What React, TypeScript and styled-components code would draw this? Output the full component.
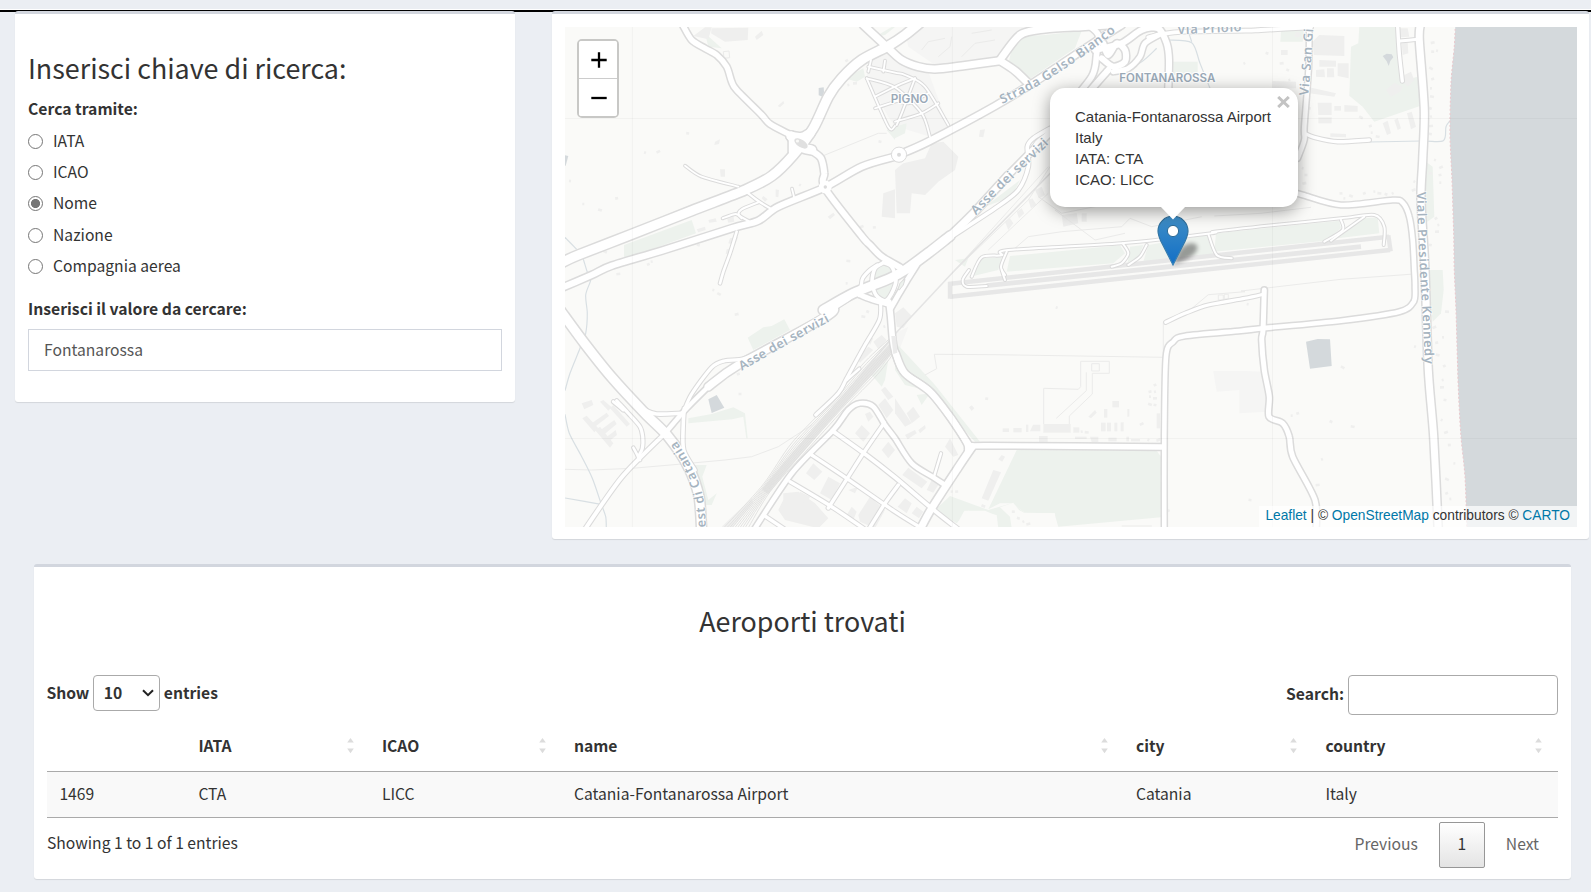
import React, { useState } from "react";
import styled, { createGlobalStyle } from "styled-components";

const GlobalStyle = createGlobalStyle`
  *, *::before, *::after { box-sizing: border-box; }
  body {
    margin: 0;
    background: #ebeef3;
    color: #333;
    font-family: "Source Sans Pro", "Noto Sans CJK SC", "Open Sans", sans-serif;
    font-size: 15.66px;
    line-height: 25px;
    overflow: hidden;
  }
`;

/* ---------- page ---------- */

const Page = styled.main`
  width: 1591px;
  height: 892px;
  padding-top: 9px;
  overflow: hidden;
`;

const TopRule = styled.div`
  height: 3px;
  border-top: 1px solid #fff;
  background: #000;
`;

const TopRow = styled.div`
  display: flex;
  align-items: flex-start;
  gap: 37px;
  margin-top: -1px;
  padding-left: 15px;
`;

const Box = styled.section`
  position: relative;
  background: #fff;
  border-top: 3px solid #d2d6de;
  border-radius: 3px;
  box-shadow: 0 1px 1px rgba(0, 0, 0, 0.1);
`;

const SearchBox = styled(Box)`
  width: 500px;
  height: 391px;
  padding: 37px 13px 0;
`;

const MapBox = styled(Box)`
  width: 1037px;
  height: 528px;
  padding: 13px 12px 0 13px;
`;

const ResultsBox = styled(Box)`
  width: 1537px;
  height: 315px;
  margin: 25px 0 0 34px;
  padding: 37px 13px 0;
`;

/* ---------- search form ---------- */

const Title = styled.h3<{ $center?: boolean }>`
  margin: 0;
  font-size: 26.86px;
  font-weight: 400;
  line-height: 34px;
  text-align: ${(p) => (p.$center ? "center" : "left")};
`;

const FieldLabel = styled.div<{ $top?: number }>`
  padding-top: ${(p) => p.$top || 0}px;
  font-size: 15.74px;
  font-weight: 700;
`;

const RadioList = styled.div`
  display: flex;
  flex-direction: column;
  gap: 6.2px;
  padding: 7px 0 18px;
`;

const RadioLabel = styled.label`
  display: flex;
  align-items: center;
  gap: 10px;
  height: 25px;
`;

const Radio = styled.input`
  appearance: none;
  width: 15px;
  height: 15px;
  margin: 2px 0 0;
  border: 1px solid #767676;
  border-radius: 50%;
  background: #fff;
  &:checked {
    background: radial-gradient(circle, #767676 0 4.2px, #fff 4.9px);
  }
`;

const TextInput = styled.input`
  display: block;
  width: 474px;
  height: 42px;
  margin-top: 8px;
  padding: 0 15px;
  border: 1px solid #d2d6de;
  border-radius: 0;
  color: #555;
  font: inherit;
  outline: none;
`;

/* ---------- map ---------- */

const MapFrame = styled.div`
  position: relative;
  width: 1012px;
  height: 500px;
  overflow: hidden;
  font-family: "Liberation Sans", Arial, sans-serif;
`;

const MapCanvas = styled.svg`
  display: block;
  width: 1012px;
  height: 500px;
`;

const ZoomControl = styled.div`
  position: absolute;
  left: 12px;
  top: 12px;
  width: 42px;
  border: 2px solid rgba(0, 0, 0, 0.2);
  border-radius: 5px;
  background-clip: padding-box;
`;

const ZoomButton = styled.button`
  display: flex;
  align-items: center;
  justify-content: center;
  width: 38px;
  height: 37px;
  padding: 0 0 0 2px;
  border: 0;
  border-radius: 0 0 2px 2px;
  background: #fff;
  &:first-child {
    height: 38px;
    border-bottom: 1px solid #ccc;
    border-radius: 2px 2px 0 0;
  }
`;

const Popup = styled.div`
  position: absolute;
  left: 485px;
  top: 61px;
  width: 248px;
  height: 119px;
  padding: 18px 25px;
  border-radius: 15px;
  background: #fff;
  box-shadow: 0 4px 17px rgba(0, 0, 0, 0.4);
  font-size: 15px;
  line-height: 21px;
  white-space: nowrap;
`;

const PopupTip = styled.svg`
  position: absolute;
  left: 595px;
  top: 179px;
  width: 26px;
  height: 14px;
`;

const PopupClose = styled.button`
  position: absolute;
  right: 8px;
  top: 8px;
  width: 13px;
  height: 12px;
  padding: 0;
  border: 0;
  background: transparent;
  line-height: 0;
`;

const Pin = styled.svg`
  position: absolute;
  left: 592px;
  top: 188px;
  width: 51px;
  height: 52px;
`;

const Attribution = styled.div`
  position: absolute;
  right: 0;
  bottom: 0;
  height: 21px;
  padding: 0 7px 0 6px;
  background: rgba(255, 255, 255, 0.7);
  font-size: 13.75px;
  line-height: 19px;
  white-space: nowrap;
  a { color: #0078a8; text-decoration: none; }
`;

/* ---------- results ---------- */

const Toolbar = styled.div`
  display: flex;
  justify-content: space-between;
  height: 40px;
  margin-top: 37px;
  font-weight: 700;
`;

const LengthPicker = styled.label`
  display: flex;
  align-items: center;
  gap: 4px;
  height: 36px;
  margin-left: -0.6px;
  > span { flex: none; }
`;

const LabelText = styled.span`
  position: relative;
  top: -1px;
`;

const SelectFrame = styled.span`
  display: flex;
  align-items: center;
  justify-content: space-between;
  width: 67px;
  height: 36px;
  margin-left: -0.6px;
  padding: 0 5px 0 10px;
  border: 1px solid #aaa;
  border-radius: 4px;
`;

const FilterField = styled.label`
  display: flex;
  align-items: center;
  gap: 4px;
  height: 38px;
`;

const FilterInput = styled.input`
  width: 210px;
  height: 40px;
  margin-top: 2px;
  border: 1px solid #aaa;
  border-radius: 4px;
  background: #fff;
  font: inherit;
  outline: none;
`;

const Table = styled.table`
  width: 1511px;
  margin-top: 7px;
  border-collapse: collapse;
  table-layout: fixed;
`;

const HeadCell = styled.th`
  height: 49px;
  padding: 0 15px 2px 12.4px;
  border-bottom: 1px solid #aaa;
  text-align: left;
`;

const HeadInner = styled.div`
  display: flex;
  align-items: center;
  justify-content: space-between;
`;

const BodyCell = styled.td`
  height: 46px;
  padding: 0 12px 2px 12.4px;
  background: #f9f9f9;
  border-bottom: 1px solid #aaa;
`;

const Footer = styled.div`
  display: flex;
  justify-content: space-between;
  align-items: flex-start;
`;

const Info = styled.div`
  padding-top: 12px;
`;

const Pager = styled.nav`
  display: flex;
  align-items: center;
  padding-top: 4px;
`;

const PageLink = styled.span`
  padding: 0 19px 2px 21px;
  color: #666;
  &:first-child { padding-right: 21px; }
`;

const PageNumber = styled.span`
  display: flex;
  align-items: center;
  justify-content: center;
  width: 46px;
  height: 46px;
  padding-bottom: 2px;
  border: 1px solid #979797;
  border-radius: 2px;
  background: linear-gradient(to bottom, #fff 0%, #dcdcdc 130%);
`;

/* ---------- map data ---------- */

// Survey sheets share a 3-units-per-pixel grid; each has its own origin.
type Pt = [number, number];
const sheets: Record<string, Pt> = {
  A: [545, 0], B: [895, 0], C: [1241, 0],
  D: [545, 270], E: [895, 270], F: [1241, 270],
  G: [820, 230],
};

// "A 10,20 30,40 B 5,6" -> absolute points
function parse(src: string): Pt[] {
  let o: Pt = sheets.A;
  const out: Pt[] = [];
  src.trim().split(/\s+/).forEach((t) => {
    if (sheets[t]) { o = sheets[t]; return; }
    const [x, y] = t.split(",").map(Number);
    out.push([o[0] + x / 3, o[1] + y / 3]);
  });
  return out;
}

const n = (v: number) => v.toFixed(1);

function smooth(src: string): string {
  const p = parse(src);
  let d = `M${n(p[0][0])} ${n(p[0][1])}`;
  for (let i = 0; i < p.length - 1; i++) {
    const a = p[i - 1] || p[i], b = p[i], c = p[i + 1], e = p[i + 2] || c;
    d += `C${n(b[0] + (c[0] - a[0]) / 7)} ${n(b[1] + (c[1] - a[1]) / 7)} ${n(c[0] - (e[0] - b[0]) / 7)} ${n(c[1] - (e[1] - b[1]) / 7)} ${n(c[0])} ${n(c[1])}`;
  }
  return d;
}

const straight = (src: string) =>
  "M" + parse(src).map((q) => `${n(q[0])} ${n(q[1])}`).join("L");

// [fill width in px, course]
const roads: [number, string][] = [
  [1.8, "A 420,497 470,530 580,560"],
  [2.2, "A 600,572 640,603 680,628"],
  [2, "A 640,607 590,628 582,645 612,664"],
  [2, "A 533,655 572,642 590,655"],
  [1.8, "A 741,566 747,590"],
  [2.6, "A 575,695 555,760 535,815 D 525,40"],
  [1.8, "A 965,235 1030,380 B 0,378"],
  [1.8, "A 990,325 1050,305 B 30,290"],
  [1.8, "A 990,290 1050,260 B 60,235"],
  [1.8, "A 965,235 1050,262 B 80,340 105,410"],
  [1.8, "A 970,200 1050,218 B 30,225 90,260 160,375"],
  [1.8, "B -80,215 -72,180"], [1.8, "B -35,215 -30,182"],
  [1.8, "B 60,235 20,340 5,375"],
  [1.8, "B 0,365 80,340 130,310"],
  [1.8, "B 0,300 40,310 100,280"],
  [3.6, "B 465,385 415,415 397,440 400,500 370,570 300,625 170,710"],
  [2.4, "B 465,395 425,425 412,450"],
  [2, "B 230,830 260,772 320,766 340,750 680,730 950,700 C -80,695 100,675 300,655 400,645 430,680 428,735"],
  [2, "B 335,755 318,800 330,825"],
  [2, "B 683,730 700,760 680,790 650,800"],
  [2, "B 755,735 735,770 700,795"],
  [2, "B 940,702 965,765 1010,775"],
  [2, "C 300,660 305,690 250,725"], [2, "C 370,650 300,700 270,722"],
  [2, "E 222,0 203,30 215,50 275,48"], [2, "E 320,0 330,30"],
  [3.4, "C 190,400 220,412 290,425 385,420"],
  [3.4, "C 470,81 475,160 484,243"], [3, "C 475,123 530,118"],
  [3.2, "E 812,157 870,130 940,105 1050,85 F 70,72"],
  [3, "D 205,395 235,420"], [3.2, "D 215,392 250,430 285,470 293,500 292,535 280,560"],
  [2.6, "D 265,533 285,570"],
  [3.2, "D 418,420 440,372 500,292 540,272 600,265 700,215 900,95 G 100,190 122,170 128,145 150,120 172,105"],
  [3.6, "D 300,420 335,432 410,430"],
  [3.6, "D 418,415 415,460 416,540 450,600"],
  [3.2, "G 182,220 178,270 135,345 80,445 D 880,370 812,435"],
  [2.6, "D 905,330 943,296"],
  [4, "D 115,785 230,622 360,490"],
  [4.5, "D 360,490 425,415 500,340"],
  [3.4, "D 735,635 860,710 970,785"],
  [3.4, "D 800,555 905,625 1050,725 E 80,775"],
  [4, "D 862,482 960,552 1050,622 E 110,715 190,778"],
  [3.4, "D 660,738 730,785"],
  [3.4, "D 1018,458 955,550 905,628 850,714"],
  [3.4, "D 1060,645 1020,700 970,780"],
  [4.6, "D 620,790 740,610 865,480 910,420 945,400 985,410 1020,465 1050,505 E 50,580 115,622 150,645"],
  [2.4, "E 138,550 117,620"],
  [5.4, "A 413,75 440,120 480,145 515,165 545,200 560,245 575,270 650,345 675,372 735,404"],
  [6.2, "A 40,868 140,825 200,797 350,752 560,685 640,662 700,620 840,562 950,500 1050,470"],
  [3.8, "B -30,478 12,464"],
  [6, "A 800,452 828,475 838,520 840,565 950,708 G 150,45 185,80 240,112"],
  [5, "F 70,60 66,180 62,210 70,300 85,380 84,440 125,460 145,500 155,560 222,690 225,785"],
  [4.6, "C 205,75 203,200 190,380 190,420 170,475"],
  [7, "A 955,75 1030,145 B 20,180 70,200 120,207 200,198 315,182"],
  [7, "B 315,180 375,105 450,87 560,80 640,75"],
  [7, "B 315,182 360,212 400,250"],
  [5.6, "B 580,75 610,105 605,160 590,230 500,340"],
  [6, "B 625,130 640,165 665,130 690,150 690,185 655,200 620,175"],
  [5, "B 655,215 700,205 735,170 750,130 800,100"],
  [6, "B 600,150 680,130 740,90 790,85 815,130 822,180 820,265"],
  [3.8, "B 760,112 800,102 870,95 1050,92 C 60,90 210,82"],
  [6.4, "B 12,464 100,425 300,318 420,245 560,152 640,100 680,75"],
  [9, "A 50,788 100,765 260,703 440,632 600,570 680,528 745,465 805,385 850,290 890,235 950,180 1030,138 B 30,105 85,60"],
  [9, "A 738,408 765,440 800,450"], [9, "A 738,408 770,412 795,400"], [9, "A 745,420 745,440 745,455"],
  [6, "B 640,210 560,300 465,398 340,525"],
  [7, "B 340,525 230,645 150,722"],
  [9, "B 165,708 105,755 G 255,120 210,145 100,190 10,240"],
  [7.4, "G 30,230 D 850,137 580,285 490,350"],
  [5, "G 290,105 265,145 235,195 212,235"],
  [3.6, "G 190,98 165,115 156,155 168,195 195,212 215,190 228,150 215,110 190,98"],
  [5, "G 120,195 160,210 205,222"],
  [5.6, "G 207,215 212,260 218,330 225,365 E 25,305 100,360 165,440 215,520 218,545"],
  [6.4, "E 2,250 30,310 105,365 165,440 225,530"],
  [7, "E 232,530 190,592 110,715 72,785"],
  [5.4, "E 232,530 280,527 799,531"],
  [4.6, "C 150,575 185,585 300,615 455,600 485,608 505,650 515,720 520,810 F 522,50 518,95 475,125 300,152 65,175 0,182 E 870,198 835,215 813,260 808,500 808,785"],
  [7, "C 538,75 535,120 550,330 545,480 540,600 552,810 F 562,300 578,500 592,785"],
  [9, "D 45,120 120,222 200,322 300,430 370,500 430,590 462,680 470,785"],
];

const parks: string[] = [
  "A 237,735 440,660 453,700 237,778",
  "D 608,203 655,172 680,168 718,148 735,180 625,240",
  "D 430,445 500,432 565,412 600,430 608,505 604,505 595,440 562,448 430,460",
  "D 450,585 485,585 472,620 490,690 515,670 500,705 482,705",
  "G 190,98 215,110 225,155 215,195 195,208 170,195 158,155 168,115",
  "D 980,315 1030,270 1020,330 1010,350",
  "E 365,540 785,542 798,560 798,742 490,770 478,730 390,728 350,700 315,700 280,718",
  "E 120,720 165,678 280,720 350,700 390,728 375,775 310,775 305,735 220,722 185,760",
  "E 0,215 120,345 255,515 240,515 100,362 30,345 0,300", "E 65,375 105,370 80,405",
  "C 355,81 470,81 484,243 530,230 537,318 400,365 365,320 325,287 330,140 352,130",
  "C 120,92 190,84 185,125 118,125", "C 555,485 575,500 580,650 553,670",
  "F 555,0 605,0 608,60 600,130 575,155",
  "B 350,150 390,108 450,105 560,92 540,145 400,240 340,190",
  "B 270,620 375,540 350,590", "B 835,185 908,185 908,225 835,225",
  "A 900,235 955,205 960,230 935,245", "A 990,110 1040,81 1050,81 1020,105",
  "A 480,100 530,145 490,140", "A 1025,390 1050,380 1050,420",
  "B 0,380 35,370 30,400 0,415",
  "B 235,828 262,775 320,772 310,810", "B 345,768 675,736 690,760 655,790 335,815",
  "B 705,740 745,735 732,770 698,788", "B 760,735 935,705 955,765 745,785",
  "C -75,700 100,682 295,662 300,685 255,722 -80,755", "C 290,715 370,655 410,652 415,700",
  "B 180,780 220,775 210,800",
];

const zones: string[] = [
  "A 965,235 970,150 1040,150 B 100,215 160,380 105,410 0,378 -20,350",
  "B 30,95 60,81 400,81 310,170 120,195 40,140",
  "E 955,303 1050,303 F 70,305 78,425 -5,430 -5,360 E 965,365",
  "E 0,190 40,170 15,235 0,240",
];

const buildings: string[] = [
  "A 500,85 610,83 608,120 540,125 498,100", "A 480,82 500,82 490,118 445,108",
  "A 630,110 650,92 655,105 635,120", "B 110,430 145,425 190,470 180,510 130,545 90,585 50,580 45,640 5,640 0,510 25,490 90,475",
  "A 1015,580 1050,568 1050,655 1010,650", "A 525,508 540,508 540,530 527,530",
  "A 510,425 525,418 522,432 508,435", "A 698,318 715,303 718,310 705,322",
  "A 848,650 865,638 870,645 855,658", "A 655,588 668,598 660,605 650,595",
  "A 692,568 702,570 700,592 692,590", "A 490,660 512,655 515,665 493,668",
  "A 545,650 565,646 568,665 550,668", "A 555,715 580,710 570,735 550,730",
  "A 545,748 562,745 560,760 542,762", "A 455,688 480,680 482,690 460,697",
  "D 110,400 140,390 145,405 118,418", "D 112,445 125,437 160,475 148,487",
  "D 150,480 165,470 205,520 195,533", "D 140,460 185,428 192,438 150,470",
  "D 160,485 208,450 215,462 172,498", "D 180,505 212,480 216,495 190,515",
  "D 165,395 175,390 200,412 190,422", "D 195,415 205,405 255,462 245,470",
  "D 935,265 970,230 985,240 945,278", "D 985,215 1010,195 1025,210 1000,238",
  "D 965,200 985,205 975,225", "D 930,490 950,465 975,490 955,515",
  "D 960,432 975,425 985,440 970,455", "D 1000,405 1020,385 1045,420 1025,445",
  "D 1008,360 1020,350 1045,380 1030,390", "D 783,610 805,580 832,605 808,630",
  "D 850,620 885,640 860,690 825,670", "D 700,720 715,690 715,670 760,665 810,700 850,745 820,775 720,750",
  "D 765,665 795,680 785,700 760,690", "D 940,735 975,680 1020,720 990,775 945,755",
  "D 905,735 920,710 935,725 925,750", "D 1010,540 1030,515 1050,540 1030,565",
  "D 910,660 940,650 930,670", "D 530,770 620,685 625,700 560,775",
  "G 225,250 250,232 275,258 250,295 230,290",
  "E 0,385 50,460 30,470 0,430", "E 35,430 55,410 75,440 50,460",
  "E 30,495 60,480 65,490 38,508", "E 70,480 90,465 92,475 75,490",
  "E 22,615 40,593 97,635 80,655",
  "E 95,660 110,630 130,645 115,668", "E 260,685 295,600 318,607 280,692",
  "E 310,568 320,555 330,560 322,575", "E 150,530 165,505 190,555 175,560",
  "E 445,462 527,462 527,488 445,488", "E 432,498 458,498 458,520 432,520",
  "E 8,710 30,685 50,700 35,730", "E 50,730 65,710 85,725 72,745",
  "E 535,472 553,472 553,488 535,488", "E 580,440 600,420 605,428 588,445",
  "E 627,417 637,417 637,443 627,443", "E 618,458 632,458 632,484 618,484",
  "E 636,458 648,458 648,484 636,484", "E 658,458 667,458 667,484 658,484",
  "E 677,457 686,457 686,484 677,484", "E 652,393 672,393 672,412 652,412",
  "E 697,417 703,417 703,440 697,440", "E 323,475 342,475 342,486 323,486",
  "E 355,474 380,474 380,487 355,487", "E 393,464 400,464 400,486 393,486",
  "E 414,464 436,464 436,484 405,484", "E 540,500 575,500 575,507 540,507",
  "E 585,500 610,500 610,516 590,516", "E 640,503 665,503 665,514 640,514",
  "E 694,500 702,500 702,514 694,514", "E 708,507 735,507 735,514 708,514",
  "E 785,430 795,430 795,475 785,475", "E 222,412 230,406 238,415 230,423",
  "C 235,105 310,108 310,168 218,165 215,125", "C 230,308 272,308 272,345 232,345",
  "C 235,180 285,182 285,200 235,200", "C 290,190 323,190 323,235 290,228",
  "C 225,210 250,208 252,232 225,230", "C 258,205 278,205 280,232 258,232",
  "C 232,352 272,352 272,370 232,370", "C 310,315 350,318 350,335 310,335",
  "C 205,262 285,280 280,290 205,280", "C 280,318 300,318 300,332 280,332",
  "C 425,370 440,362 450,400 438,405", "C 498,340 512,335 525,380 510,388",
  "C 460,360 470,355 480,385 470,390", "C 268,400 315,402 315,412 268,410",
  "C 95,243 165,245 165,265 95,265", "C 435,270 460,248 485,260 478,275 450,290",
  "C 490,225 510,215 520,240 500,260 490,250", "C 475,85 500,85 505,110 478,112",
  "C 482,130 500,128 502,160 485,165", "C 120,150 140,150 140,165 120,165",
  "C 165,95 180,100 175,112 160,110",
  "B 330,665 345,655 355,670 340,690", "B 365,635 380,625 388,640 372,655",
  "B 400,600 412,595 425,615 408,625", "B 420,570 440,560 450,585 432,595",
  "B 500,645 545,640 550,670 505,680", "B 560,640 575,640 575,665 560,665",
  "B 255,390 270,388 265,412 252,410",
  "E 680,766 770,766 770,770 680,770",
];

const clearings: string[] = [
  "E 190,755 208,722 270,722 300,735 308,775 185,775",
  "E 315,712 355,698 372,720 390,730 480,730 482,775 350,775 345,740",
];

// small sheds along the shore and in the fields
const sheds: string =
  "A 428,400 A 300,458 A 340,455 A 215,595 A 115,612 A 165,630 A 905,182 A 910,255 A 930,250 A 1005,425 A 765,555 A 950,680 A 988,682 A 75,543 A 180,755 A 310,793 A 320,785 A 910,783 A 460,735 A 590,685 D 575,133 D 585,372 D 505,60 D 522,72 D 580,312 D 905,40 D 955,140 D 968,125 D 1018,170 D 220,12 E 275,386 E 485,113 E 740,462 E 765,365 E 765,380 E 765,403 E 780,345 E 780,365 E 780,385 E 780,405 E 760,510 E 790,510 E 185,665 E 170,665 E 265,708 E 820,722 E 560,485 E 575,487 E 370,745 E 385,755 E 400,762 E 355,725 F 20,103 F 305,292 F 170,430 F 152,437 F 335,470 F 270,455 F 243,568 F 230,645 F 27,690 F 522,230 F 580,172 F 587,218 F 606,202 F 590,255 F 610,288 F 605,330 F 603,352 F 612,390 F 602,450 F 615,487 F 625,525 F 640,580 F 618,628 F 617,670 F 628,687 F 618,125 C 78,160 C 10,190 C 575,128 C 575,155 C 588,152 C 570,205 C 575,237 C 570,265 C 573,290 C 568,325 C 570,350 C 570,378 C 568,402 C 582,480 C 600,502 C 597,525 C 598,548 C 568,520 C 585,655 C 592,675 C 588,695 C 568,735 C 520,545 C 518,570 C 300,580 C 310,595 C 330,588 C 370,580 C 400,575 C 415,580 C 435,583 C 455,580 C 190,550 C 195,525 C 185,505 C 360,352 C 388,378 C 392,398 C 410,410 C 140,210 C 145,240 C 122,190 C 205,325";

const waters: string[] = [
  "D 490,388 515,375 538,413 500,429",
  "F 195,215 230,207 267,208 272,288 207,296",
  "A 821,264 836,262 837,276 833,290 821,286",
  "A 58,465 70,468 62,497 58,497",
  "C 425,168 437,161 452,163 457,172 448,183 443,198 437,184",
];

const streams: string[] = [
  "A 58,710 95,748", "A 115,778 128,820 D 137,30 122,75 127,130 122,190 105,235 75,310 60,362",
  "D 60,433 73,490 110,560 142,625 168,700 182,740 184,775", "D 60,684 168,703",
  "C 385,426 540,423 607,422 615,380 627,362",
  "B 820,120 890,128 915,190 945,265", "B 880,95 890,125", "B 785,145 740,185 670,220",
];

const paths: string[] = [
  "A 835,467 1000,400 1025,400", "D 60,598 140,600 262,595 400,583 540,570 620,560 700,530 800,465",
  "E 118,253 300,254 805,262 805,157", "E 118,253 125,296 90,315",
  "E 885,120 940,74 1050,65 F 0,63 300,28 520,12",
  "E 446,462 446,355 550,358 557,350 557,274 643,274 643,310 592,310 592,372 523,438 523,462",
  "E 590,281 613,281 613,303 590,303 590,281", "E 970,75 985,75 985,90 970,90 970,75", "E 988,73 1000,73 1000,87 988,87 988,73",
  "E 484,445 574,362 574,307", "B 180,810 460,500", "B 360,745 400,710 500,695 680,680 705,655 770,680 920,650",
  "B 150,840 400,600 465,500", "B 430,590 500,640 700,600", "C -80,648 60,640 210,622",
  "B 280,750 460,580", "C 535,81 520,75", "B 480,630 600,720 690,700",
  "A 535,155 552,153 554,173 537,175 535,155",
  "B 80,150 100,125 150,115", "B 130,170 165,140 170,110", "B 200,170 240,130 300,120", "B 230,100 290,90",
];

const runway: string[] = [
  "E 165,36 165,86", "E 160,42 1482,-100", "E 165,80 1485,-60", "E 1480,-104 1487,-56",
];

const railLines = [-20, -15, -11, -7, -3, 1, 5, 9, 13, 18];

const seams = {
  v: [632.3, 952.3, 1272.6],
  h: [118.4, 438.4],
};

const coast =
  "C 643,75 640,140 630,250 627,400 633,540 638,700 640,810 F 645,120 652,350 660,500 672,620 678,785";

interface RoadLabel { id: string; course: string; text: string; len: number }
const labels: RoadLabel[] = [
  { id: "asse1", course: "D 590,302 650,268 720,228 862,150", text: "Asse dei servizi", len: 101 },
  { id: "asse2", course: "B 243,646 300,588 370,520 474,420", text: "Asse dei servizi", len: 102 },
  { id: "gelso", course: "B 322,312 430,257 540,186 610,136 672,88", text: "Strada Gelso Bianco", len: 135 },
  { id: "priolo", course: "B 848,103 940,99 1045,93", text: "Via Priolo", len: 64 },
  { id: "sangi", course: "C 202,287 210,190 218,60", text: "Via San Gi", len: 67 },
  { id: "kennedy", course: "C 527,576 531,700 538,840 F 544,120 552,290", text: "Viale Presidente Kennedy", len: 172 },
  { id: "catania", course: "D 482,772 478,700 462,640 430,570 392,508", text: "est di Catania", len: 93 },
];

const roadCase = (w: number) => (w > 4 ? 3 : 2);

function BaseMap() {
  let o: Pt = sheets.A;
  const shedNodes: React.ReactNode[] = [];
  sheds.split(" ").forEach((t, i) => {
    if (sheets[t]) { o = sheets[t]; return; }
    const [x, y] = t.split(",").map(Number);
    const w = 2 + (i % 3);
    const x0 = o[0] + x / 3, y0 = o[1] + y / 3;
    shedNodes.push(
      <rect key={i} x={x0 - w / 2} y={y0 - 1.3} width={w} height={2.6}
        transform={`rotate(${(i * 37) % 60 - 30} ${x0} ${y0})`} />
    );
  });
  return (
    <MapCanvas viewBox="565 27 1012 500" aria-label="Catania">
      <rect x="565" y="27" width="1012" height="500" fill="#fafaf8" />
      <g fill="#f5f5f4">{zones.map((z) => <path key={z} d={straight(z) + "Z"} />)}</g>
      <g fill="#edf2ed">{parks.map((z) => <path key={z} d={straight(z) + "Z"} />)}</g>
      <g fill="#fafaf8">{clearings.map((z) => <path key={z} d={straight(z) + "Z"} />)}</g>
      <g fill="#efefee">
        {buildings.map((z) => <path key={z} d={straight(z) + "Z"} />)}
        {shedNodes}
      </g>
      <g fill="none" stroke="#ebebea" strokeWidth="1">
        {paths.map((z) => <path key={z} d={straight(z)} />)}
      </g>
      <g fill="none" stroke="#d8dfe3" strokeWidth="1.2">
        {streams.map((z) => <path key={z} d={smooth(z)} />)}
      </g>
      <g fill="#d4d9dc">
        {waters.map((z) => <path key={z} d={straight(z) + "Z"} />)}
        <path d={smooth(coast) + "L1600 540L1600 20Z"} />
      </g>
      <path d={smooth(coast)} fill="none" stroke="#e9c9cd" strokeWidth="1.1" strokeDasharray="2 2" />
      <g fill="none" stroke="#e7e7e7" strokeWidth="4.4">
        {runway.map((z) => <path key={z} d={straight(z)} />)}
        <path d={straight("E 275,47 1398,-70")} strokeWidth="4.8" />
      </g>
      <path d={straight("B 500,485 E 180,0 60,128 0,192 D 900,372")} fill="none" stroke="#e4e4e4" strokeWidth="1.6" />
      <path d={smooth("D 1048,225 960,320 860,430 760,545 660,665")} fill="none" stroke="#e6e6e5" strokeWidth="8" />
      <g fill="none" stroke="#e0e0df" strokeWidth="0.9">
        {railLines.map((k) => (
          <path key={k} d={smooth(`D ${1052 + k * 0.3},${215 + k} ${980 + k},${295 + k} ${880 + k},${405 + k * 0.6} ${760 + k},${535 + k * 0.8} ${665 + k * 0.6},${655 + k * 0.5} ${570 + k * 2},780`)} />
        ))}
      </g>
      <g fill="none" stroke="#dbdbdb" strokeLinecap="round" strokeLinejoin="round">
        {roads.map(([w, z]) => <path key={z} d={smooth(z)} strokeWidth={w + roadCase(w)} />)}
      </g>
      <g fill="none" stroke="#fff" strokeLinecap="round" strokeLinejoin="round">
        {roads.map(([w, z]) => <path key={z} d={smooth(z)} strokeWidth={w} />)}
      </g>
      <path d={straight("G 214,318 228,318 232,368 220,372") + "Z"} fill="#ebebeb" />
      <path d={straight("G 250,150 255,148 250,165 238,180 234,178 240,160") + "Z"} fill="#edf2ed" stroke="#dbdbdb" />
      <circle cx="899" cy="154.7" r="7.6" fill="#fff" stroke="#dbdbdb" />
      <circle cx="899" cy="154.7" r="2" fill="#dbdbdb" />
      <circle cx="825.3" cy="187" r="6.4" fill="#fff" />
      <circle cx="825.3" cy="187" r="1.7" fill="#dbdbdb" />
      <ellipse cx="801" cy="143.4" rx="7.6" ry="3.8" transform="rotate(33 801 143.4)" fill="#e0e0e0" />
      <circle cx="797.5" cy="141" r="1.6" fill="#fafaf8" />
      <g fill="none" stroke="#000" strokeOpacity="0.035">
        {seams.v.map((x) => <path key={x} d={`M${x} 27V527`} />)}
        {seams.h.map((y) => <path key={y} d={`M565 ${y}H1577`} />)}
      </g>
      <defs>{labels.map((l) => <path key={l.id} id={l.id} d={smooth(l.course)} />)}</defs>
      <g fill="#a6b4c0" stroke="#fff" strokeOpacity="0.8" strokeWidth="1.4" paintOrder="stroke" fontFamily="'Noto Sans', sans-serif" fontWeight="600" fontSize="12.8">
        {labels.map((l) => (
          <text key={l.id} textLength={l.len}>
            <textPath href={`#${l.id}`} textLength={l.len}>{l.text}</textPath>
          </text>
        ))}
      </g>
      <g fill="#9aa9b7" stroke="#fff" strokeWidth="2" paintOrder="stroke" fontFamily="Inter, sans-serif" fontWeight="600" fontSize="11.6">
        <text x="1119.3" y="82" textLength="96" lengthAdjust="spacingAndGlyphs">FONTANAROSSA</text>
        <text x="890.8" y="103.2" textLength="37.5" lengthAdjust="spacingAndGlyphs">PIGNO</text>
      </g>
    </MapCanvas>
  );
}

function MapPin() {
  return (
    <Pin viewBox="0 0 51 52">
      <defs>
        <linearGradient id="pinFill" x1="0" y1="0" x2="0" y2="1">
          <stop offset="0" stopColor="#3f8ec6" />
          <stop offset="1" stopColor="#126fc6" />
        </linearGradient>
        <linearGradient id="pinEdge" x1="0" y1="0" x2="0" y2="1">
          <stop offset="0" stopColor="#2e6c97" />
          <stop offset="1" stopColor="#3883b7" />
        </linearGradient>
        <filter id="soft" x="-30%" y="-30%" width="160%" height="160%">
          <feGaussianBlur stdDeviation="2" />
        </filter>
      </defs>
      <path d="M16 50L22 36C27 28 38 26 40 31C42 36 34 42 28 45Z" fill="#000" opacity="0.36" filter="url(#soft)" />
      <path
        d="M16 1.2C7.600 1.200 1 7.900 1 16.100C1 20 3.200 24.700 4.300 27.100L16 50L27.700 27.100C28.800 24.700 31 20 31 16.100C31 7.900 24.400 1.200 16 1.200Z"
        fill="url(#pinFill)" stroke="url(#pinEdge)" strokeWidth="1.2" />
      <circle cx="16" cy="16" r="5.600" fill="#fff" stroke="#2e6c97" strokeWidth="1" />
    </Pin>
  );
}

const SortIcon = () => (
  <svg width="9" height="17" viewBox="0 0 9 17" fill="#dcdcdc">
    <path d="M1.200 5.400L4.500 1L7.800 5.400Z" />
    <path d="M1.200 11.400H7.800L4.500 16.200Z" />
  </svg>
);

const options = ["IATA", "ICAO", "Nome", "Nazione", "Compagnia aerea"];

const columns: { label: string; width: number; value: string }[] = [
  { label: "", width: 139, value: "1469" },
  { label: "IATA", width: 183.5, value: "CTA" },
  { label: "ICAO", width: 192, value: "LICC" },
  { label: "name", width: 562, value: "Catania-Fontanarossa Airport" },
  { label: "city", width: 189.5, value: "Catania" },
  { label: "country", width: 245, value: "Italy" },
];

export default function App() {
  const [mode, setMode] = useState("Nome");
  const [query, setQuery] = useState("Fontanarossa");
  return (
    <>
      <GlobalStyle />
      <Page>
        <TopRule />
        <TopRow>
          <SearchBox>
            <Title>Inserisci chiave di ricerca:</Title>
            <FieldLabel $top={11}>Cerca tramite:</FieldLabel>
            <RadioList>
              {options.map((o) => (
                <RadioLabel key={o}>
                  <Radio type="radio" name="mode" checked={mode === o} onChange={() => setMode(o)} />
                  {o}
                </RadioLabel>
              ))}
            </RadioList>
            <FieldLabel>Inserisci il valore da cercare:</FieldLabel>
            <TextInput value={query} onChange={(e) => setQuery(e.target.value)} />
          </SearchBox>
          <MapBox>
            <MapFrame>
              <BaseMap />
              <MapPin />
              <ZoomControl>
                <ZoomButton aria-label="Zoom in">
                  <svg width="16" height="16" viewBox="0 0 16 16" stroke="#000" strokeWidth="2.300">
                    <path d="M0.300 8H15.700M8 0.300V15.700" />
                  </svg>
                </ZoomButton>
                <ZoomButton aria-label="Zoom out">
                  <svg width="16" height="16" viewBox="0 0 16 16" stroke="#000" strokeWidth="2.300">
                    <path d="M0.300 8H15.700" />
                  </svg>
                </ZoomButton>
              </ZoomControl>
              <Popup>
                Catania-Fontanarossa Airport<br />Italy<br />IATA: CTA<br />ICAO: LICC
                <PopupClose aria-label="Close">
                  <svg width="13" height="12" viewBox="0 0 13 12" stroke="#c3c3c3" strokeWidth="3">
                    <path d="M1.200 1L11.800 11M11.800 1L1.200 11" />
                  </svg>
                </PopupClose>
              </Popup>
              <PopupTip viewBox="0 0 26 14"><path d="M0 0H26L13 13.500Z" fill="#fff" /></PopupTip>
              <Attribution>
                <a>Leaflet</a> | © <a>OpenStreetMap</a> contributors © <a>CARTO</a>
              </Attribution>
            </MapFrame>
          </MapBox>
        </TopRow>
        <ResultsBox>
          <Title $center>Aeroporti trovati</Title>
          <Toolbar>
            <LengthPicker>
              <LabelText>Show</LabelText>
              <SelectFrame>
                <LabelText>10</LabelText>
                <svg width="12" height="8" viewBox="0 0 12 8" fill="none" stroke="#222" strokeWidth="2">
                  <path d="M1 1.200L6 6.200L11 1.200" />
                </svg>
              </SelectFrame>
              <LabelText>entries</LabelText>
            </LengthPicker>
            <FilterField>
              <LabelText>Search:</LabelText>
              <FilterInput />
            </FilterField>
          </Toolbar>
          <Table>
            <colgroup>
              {columns.map((c) => <col key={c.label} style={{ width: c.width }} />)}
            </colgroup>
            <thead>
              <tr>
                {columns.map((c) => (
                  <HeadCell key={c.label}>
                    {c.label && <HeadInner>{c.label}<SortIcon /></HeadInner>}
                  </HeadCell>
                ))}
              </tr>
            </thead>
            <tbody>
              <tr>{columns.map((c) => <BodyCell key={c.label}>{c.value}</BodyCell>)}</tr>
            </tbody>
          </Table>
          <Footer>
            <Info>Showing 1 to 1 of 1 entries</Info>
            <Pager>
              <PageLink>Previous</PageLink>
              <PageNumber>1</PageNumber>
              <PageLink>Next</PageLink>
            </Pager>
          </Footer>
        </ResultsBox>
      </Page>
    </>
  );
}
